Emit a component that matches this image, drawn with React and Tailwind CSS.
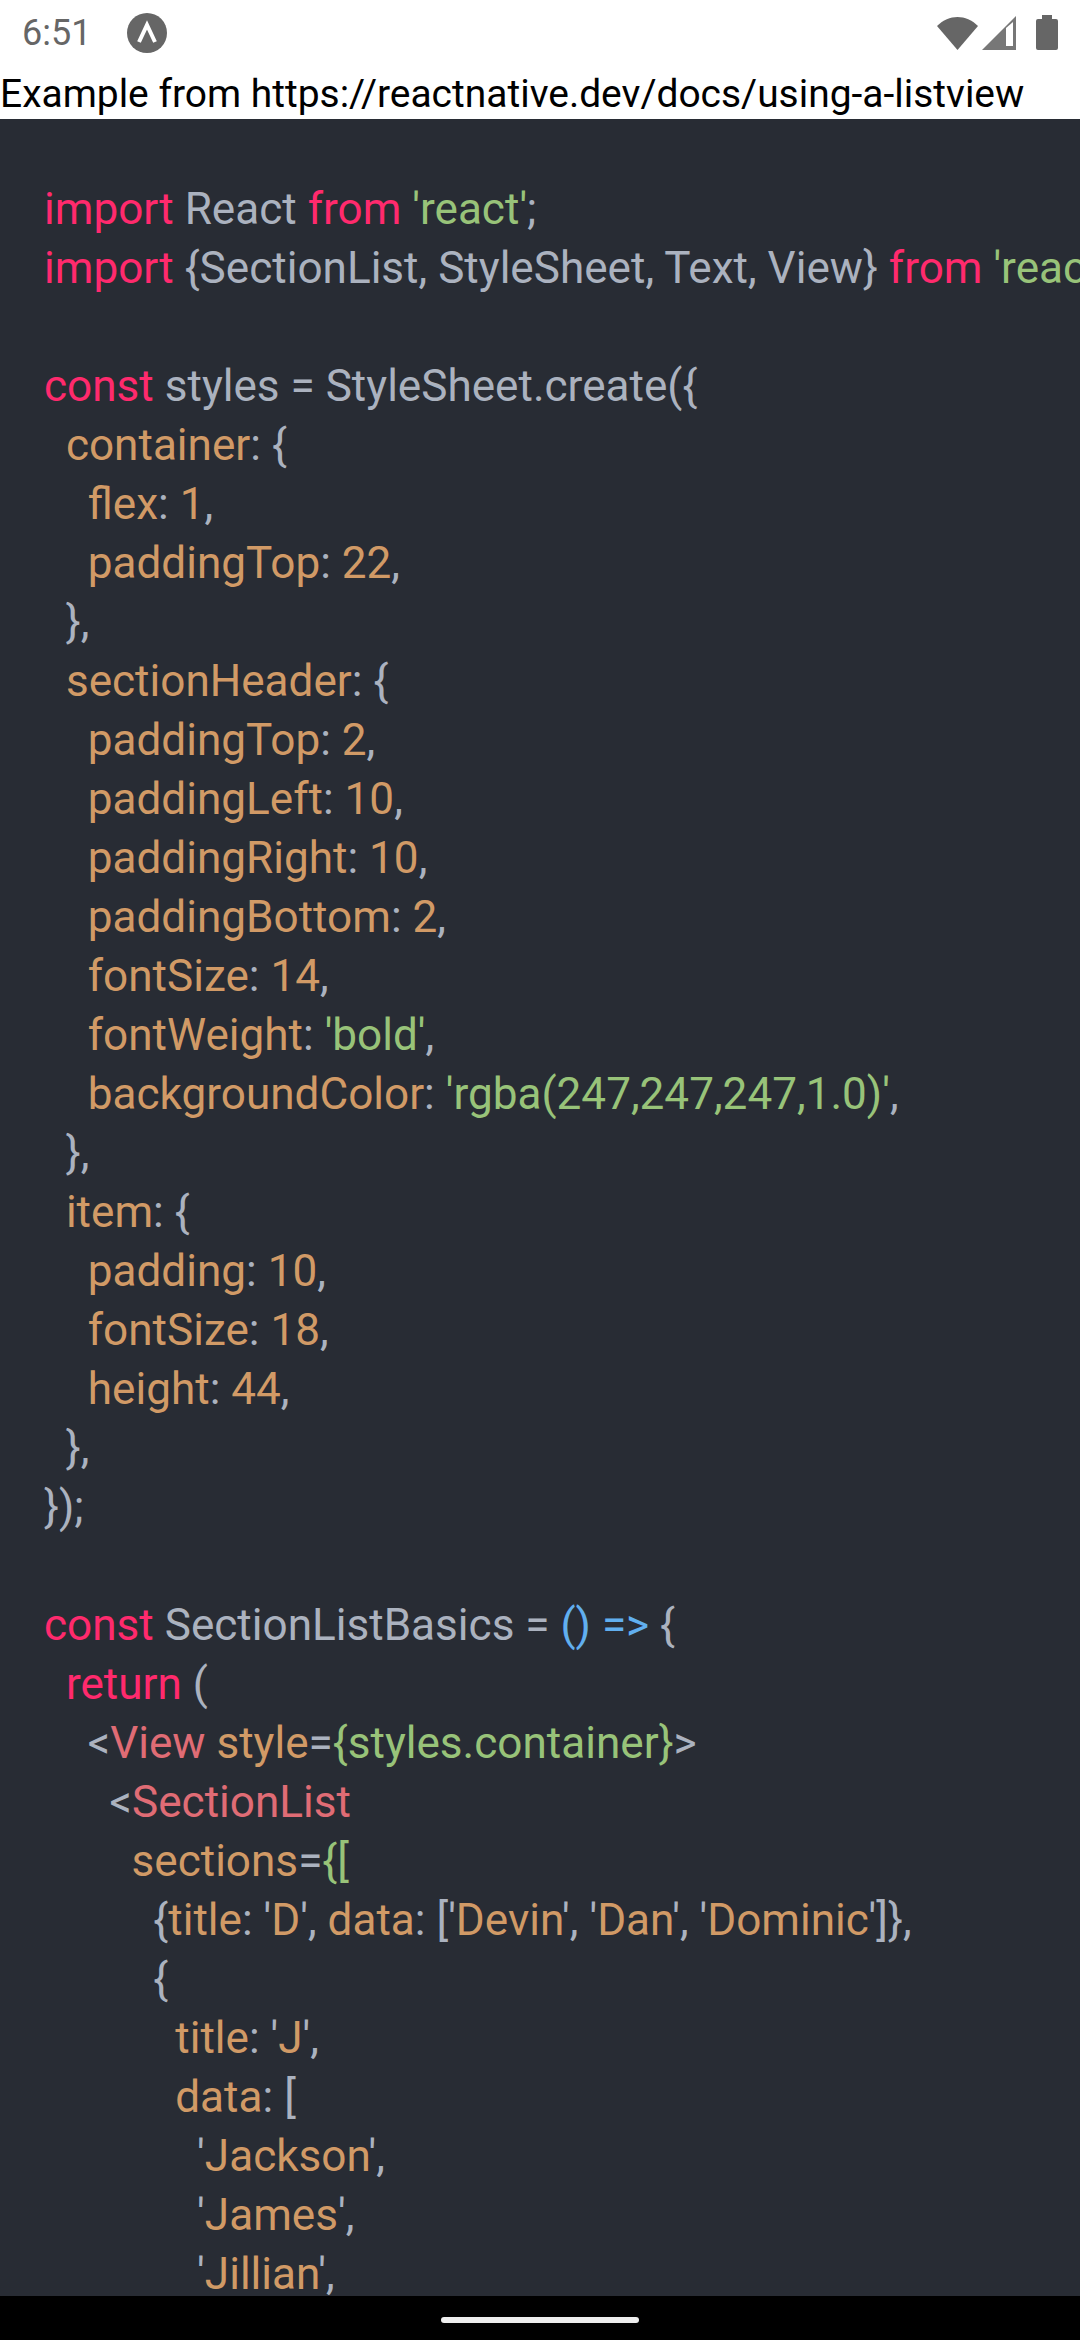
const P = "text-[#ff2a6d]"; // keyword
const G = "text-[#abb2bf]"; // plain
const S = "text-[#98c379]"; // string
const O = "text-[#d19a66]"; // property
const B = "text-[#61afef]"; // arrow
const T = "text-[#e06c75]"; // tag

const prop = (indent, key, value, end = ",") => [
  [G, indent],
  [O, key],
  [G, ": "],
  [O, value],
  [G, end],
];

const lines = [
  [],
  [[P, "import"], [G, " React "], [P, "from"], [G, " "], [S, "'react'"], [G, ";"]],
  [[P, "import"], [G, " {SectionList, StyleSheet, Text, View} "], [P, "from"], [G, " "], [S, "'react-native'"], [G, ";"]],
  [],
  [[P, "const"], [G, " styles = StyleSheet.create({"]],
  [[G, "  "], [O, "container"], [G, ": {"]],
  prop("    ", "flex", "1"),
  prop("    ", "paddingTop", "22"),
  [[G, "  },"]],
  [[G, "  "], [O, "sectionHeader"], [G, ": {"]],
  prop("    ", "paddingTop", "2"),
  prop("    ", "paddingLeft", "10"),
  prop("    ", "paddingRight", "10"),
  prop("    ", "paddingBottom", "2"),
  prop("    ", "fontSize", "14"),
  [[G, "    "], [O, "fontWeight"], [G, ": "], [S, "'bold'"], [G, ","]],
  [[G, "    "], [O, "backgroundColor"], [G, ": "], [S, "'rgba(247,247,247,1.0)'"], [G, ","]],
  [[G, "  },"]],
  [[G, "  "], [O, "item"], [G, ": {"]],
  prop("    ", "padding", "10"),
  prop("    ", "fontSize", "18"),
  prop("    ", "height", "44"),
  [[G, "  },"]],
  [[G, "});"]],
  [],
  [[P, "const"], [G, " SectionListBasics = "], [B, "() =>"], [G, " {"]],
  [[G, "  "], [P, "return"], [G, " ("]],
  [[G, "    <"], [T, "View"], [G, " "], [O, "style"], [G, "="], [S, "{styles.container}"], [G, ">"]],
  [[G, "      <"], [T, "SectionList"]],
  [[G, "        "], [O, "sections"], [G, "="], [S, "{["]],
  [[G, "          {"], [O, "title"], [G, ": '"], [O, "D"], [G, "', "], [O, "data"], [G, ": ['"], [O, "Devin"], [G, "', '"], [O, "Dan"], [G, "', '"], [O, "Dominic"], [G, "']},"]],
  [[G, "          {"]],
  [[G, "            "], [O, "title"], [G, ": '"], [O, "J"], [G, "',"]],
  [[G, "            "], [O, "data"], [G, ": ["]],
  [[G, "              '"], [O, "Jackson"], [G, "',"]],
  [[G, "              '"], [O, "James"], [G, "',"]],
  [[G, "              '"], [O, "Jillian"], [G, "',"]],
];

const StatusBar = () => (
  <div className="flex h-[66px] shrink-0 items-center justify-between pl-[22px] pr-[22px] text-[#666666]">
    <div className="flex items-center gap-[36px]">
      <span className="text-[36px] leading-none">6:51</span>
      <svg width="40" height="40" viewBox="0 0 40 40">
        <circle cx="20" cy="20" r="20" fill="#666666" />
        <path d="M12 29 L20 12 L28 29" fill="none" stroke="#ffffff" strokeWidth="4" />
      </svg>
    </div>
    <div className="flex items-center">
      <svg width="42" height="36" viewBox="0 0 42 36">
        <path d="M0 11 C12 -1 29 -1 41 11 L20.5 35 Z" fill="#666666" />
      </svg>
      <svg width="36" height="36" viewBox="0 0 36 36" className="ml-[3px]">
        <path d="M0 35 L34 1 V35 Z" fill="#777777" />
        <path d="M24 13 V31 H31 V7 Z" fill="#ffffff" />
      </svg>
      <svg width="22" height="36" viewBox="0 0 22 36" className="ml-[18px]">
        <path d="M6 0 H16 V4 H20 Q22 4 22 6 V33 Q22 35 20 35 H2 Q0 35 0 33 V6 Q0 4 2 4 H6 Z" fill="#666666" />
      </svg>
    </div>
  </div>
);

export default function App() {
  return (
    <div className="flex h-[2340px] w-[1080px] flex-col overflow-hidden bg-white font-['Roboto',sans-serif]">
      <StatusBar />
      <div className="h-[53px] shrink-0 whitespace-nowrap pt-[4px] text-[38.95px] leading-[49px] text-black">
        Example from https://reactnative.dev/docs/using-a-listview
      </div>
      <div className="min-h-0 flex-1 overflow-hidden bg-[#282c34] pl-[44px] pt-[2px]">
        {lines.map((line, i) => (
          <div key={i} className="h-[59px] whitespace-pre text-[44.1px] leading-[59px]">
            {line.map(([color, text], j) => (
              <span key={j} className={color}>{text}</span>
            ))}
          </div>
        ))}
      </div>
      <div className="flex h-[44px] shrink-0 items-start justify-center bg-black pt-[21px]">
        <div className="h-[6px] w-[198px] rounded-full bg-[#eeeeee]" />
      </div>
    </div>
  );
}
